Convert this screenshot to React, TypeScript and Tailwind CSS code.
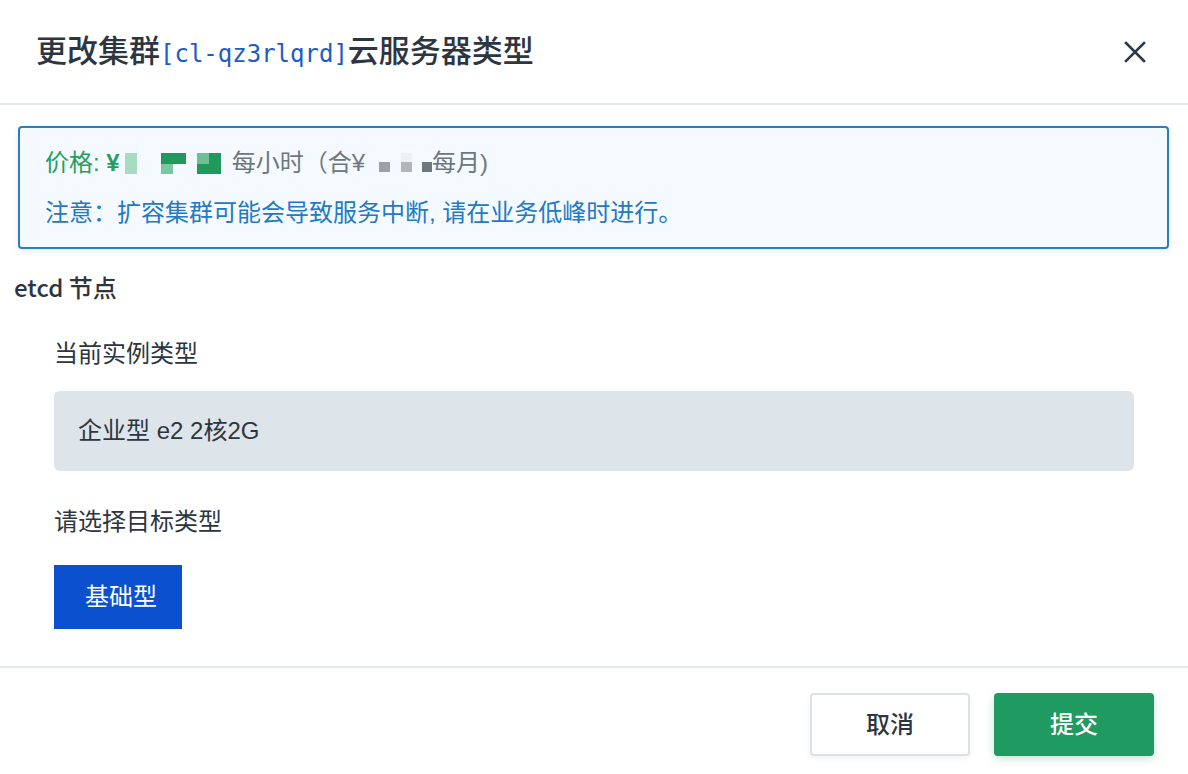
import React from "react";

const sans = { fontFamily: '"Liberation Sans", "Noto Sans CJK SC", sans-serif' };

function CloseIcon() {
  return (
    <svg width="22" height="22" viewBox="0 0 22 22" fill="none" stroke="#2b3a4a" strokeWidth="2.6" strokeLinecap="square">
      <path d="M2 2L20 20M20 2L2 20" />
    </svg>
  );
}

// masked price digits, drawn as blocks
function HourPrice() {
  return (
    <>
      <div className="ml-[5px] w-[12px] h-[21px] bg-[#a8dcc0]" />
      <div className="ml-[24px] w-[25px] h-[21px] flex flex-col">
        <div className="h-[11px] bg-[#1f9a5a]" />
        <div className="flex h-[10px]">
          <div className="w-[12px] bg-[#7cc7a0]" />
        </div>
      </div>
      <div className="ml-[11px] w-[24px] h-[21px] flex">
        <div className="w-[12px] flex flex-col">
          <div className="h-[11px] bg-[#6fbf94]" />
          <div className="h-[10px] bg-[#1f9a5a]" />
        </div>
        <div className="w-[12px] bg-[#1f9a5a]" />
      </div>
    </>
  );
}

function MonthPrice() {
  return (
    <>
      <div className="ml-[14px] w-[11px] h-[21px] flex flex-col justify-end pb-[2px]">
        <div className="h-[10px] bg-[#9aa1a8]" />
      </div>
      <div className="ml-[11px] w-[11px] h-[21px] flex flex-col pb-[2px]">
        <div className="h-[10px] bg-[#eef1f4]" />
        <div className="h-[10px] bg-[#b0b6bc]" />
      </div>
      <div className="ml-[10px] w-[10px] h-[21px] flex flex-col justify-end pb-[2px]">
        <div className="h-[10px] bg-[#6f7881]" />
      </div>
    </>
  );
}

export default function App() {
  return (
    <div className="w-[1188px] h-[774px] bg-white flex flex-col text-[#2d3540]" style={sans}>
      {/* header */}
      <div className="h-[105px] shrink-0 flex items-center justify-between pl-[36px] pr-[42px] border-b-2 border-[#e3e8ed]">
        <h1 className="text-[31px] font-medium leading-none flex items-baseline">
          <span>更改集群</span>
          <span className="text-[24px] text-[#1d5bc6]" style={{ fontFamily: '"DejaVu Sans Mono", monospace' }}>
            [cl-qz3rlqrd]
          </span>
          <span>云服务器类型</span>
        </h1>
        <CloseIcon />
      </div>

      {/* notice */}
      <div className="mt-[21px] ml-[18px] mr-[19px] h-[123px] rounded-[4px] border-2 border-[#2d7cc1] bg-[#f4faff] shadow-[0_2px_6px_rgba(45,124,193,0.15)] pl-[25px] pt-[20px] text-[24px]">
        <div className="h-[30px] flex items-center whitespace-nowrap">
          <span className="text-[#2a9d5c]">
            价格: <span className="font-bold">¥</span>
          </span>
          <HourPrice />
          <span className="ml-[11px] text-[#6f777e]">每小时（合¥</span>
          <MonthPrice />
          <span className="text-[#6f777e]">每月)</span>
        </div>
        <div className="mt-[20px] h-[30px] flex items-center text-[#2279c4] whitespace-nowrap">
          注意：扩容集群可能会导致服务中断, 请在业务低峰时进行。
        </div>
      </div>

      {/* body */}
      <div className="flex-1 flex flex-col">
        <div
          className="mt-[22px] ml-[14px] h-[32px] flex items-center text-[24px] font-medium"
          style={{ fontFamily: '"Noto Sans CJK SC", sans-serif' }}
        >
          etcd 节点
        </div>
        <div className="pl-[54px] pr-[54px] flex flex-col">
          <div className="mt-[35px] h-[32px] flex items-center text-[24px]">当前实例类型</div>
          <div className="mt-[21px] h-[80px] rounded-[6px] bg-[#dde4ea] flex items-center pl-[24px] text-[24px]">
            企业型 e2 2核2G
          </div>
          <div className="mt-[35px] h-[32px] flex items-center text-[24px]">请选择目标类型</div>
          <div className="mt-[27px] flex">
            <button className="w-[128px] h-[64px] bg-[#0b50cf] text-white text-[24px] flex items-center justify-center pl-[6px]">
              基础型
            </button>
          </div>
        </div>
      </div>

      {/* footer */}
      <div className="h-[108px] shrink-0 border-t-2 border-[#e3e8ed] flex items-start justify-end pt-[25px] pr-[34px] gap-[24px]">
        <button className="w-[160px] h-[63px] rounded-[4px] border-2 border-[#dbe1e7] bg-white text-[24px] font-medium text-[#2d3540] shadow-[0_2px_6px_rgba(0,0,0,0.06)]">
          取消
        </button>
        <button className="w-[160px] h-[63px] rounded-[4px] bg-[#1f9a60] text-[24px] font-medium text-white shadow-[0_3px_8px_rgba(31,154,96,0.25)]">
          提交
        </button>
      </div>
    </div>
  );
}
